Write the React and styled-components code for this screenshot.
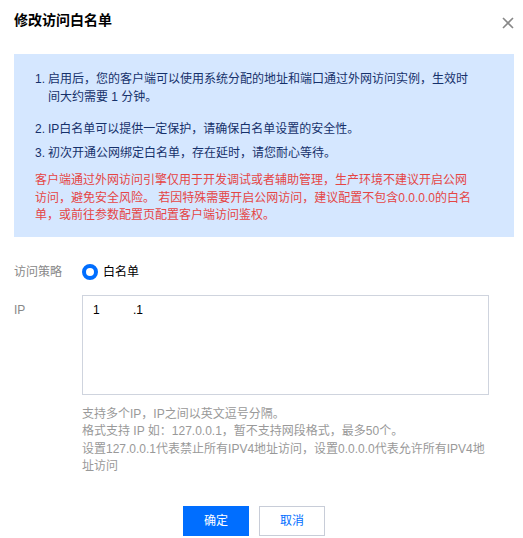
import React from 'react'
import styled, { createGlobalStyle } from 'styled-components'

const GlobalStyle = createGlobalStyle`
  body {
    margin: 0;
    background: #fff;
    font-family: "Liberation Sans", "Noto Sans CJK SC", sans-serif;
    -webkit-font-smoothing: antialiased;
  }
`

const Dialog = styled.div`
  width: 523px;
  height: 538px;
  background: #fff;
  box-sizing: border-box;
`

const Header = styled.div`
  height: 54px;
  display: flex;
  justify-content: space-between;
  align-items: flex-start;
  padding: 10px 9px 0 14px;
  box-sizing: border-box;
`

const Title = styled.h3`
  margin: 0;
  font-size: 14px;
  line-height: 20px;
  font-weight: 700;
  color: #000;
`

const Close = styled.button`
  border: 0;
  background: none;
  padding: 0;
  margin-top: 7px;
  width: 12px;
  height: 12px;
  display: flex;
  cursor: pointer;
`

const Notice = styled.div`
  margin: 0 9px 0 14px;
  padding: 17px 38px 12px 21px;
  background: #d5e7ff;
  font-size: 12px;
  line-height: 17.5px;
`

const Item = styled.div`
  display: flex;
  color: #15316b;
  margin-bottom: ${({ $gap }) => $gap}px;
`

const Num = styled.span`
  flex: 0 0 13px;
`

const Warn = styled.p`
  margin: 0;
  color: #e54545;
`

const Form = styled.div`
  padding: 26px 34px 0 14px;
  font-size: 12px;
  line-height: 18px;
`

const Row = styled.div`
  display: flex;
  align-items: flex-start;
  margin-bottom: ${({ $gap }) => $gap || 0}px;
`

const Label = styled.label`
  flex: 0 0 68px;
  color: #888;
  padding-top: ${({ $top }) => $top || 0}px;
`

const Radio = styled.span`
  display: inline-flex;
  align-items: center;
  gap: 5px;
  color: #000;

  &::before {
    content: '';
    width: 16px;
    height: 16px;
    box-sizing: border-box;
    border-radius: 50%;
    border: 4px solid #006eff;
    background: #fff;
  }
`

const Field = styled.div`
  flex: 1;
`

const Area = styled.textarea`
  display: block;
  width: 100%;
  height: 100px;
  box-sizing: border-box;
  border: 1px solid #cfd4de;
  border-radius: 0;
  padding: 5px 10px;
  resize: none;
  outline: none;
  font: inherit;
  font-size: 12px;
  line-height: 18px;
  color: #000;
  white-space: pre;
`

const Help = styled.div`
  margin-top: 11px;
  color: #999;
  line-height: 17.5px;
`

const Footer = styled.div`
  display: flex;
  justify-content: center;
  gap: 10px;
  padding-left: 5px;
  margin-top: 30px;
`

const Button = styled.button`
  width: 66px;
  height: 30px;
  box-sizing: border-box;
  font: inherit;
  font-size: 12px;
  border: 1px solid ${({ $primary }) => ($primary ? '#006eff' : '#c8cdd8')};
  background: ${({ $primary }) => ($primary ? '#006eff' : '#fff')};
  color: ${({ $primary }) => ($primary ? '#fff' : '#006eff')};
  cursor: pointer;
`

const notes = [
  { n: '1.', text: '启用后，您的客户端可以使用系统分配的地址和端口通过外网访问实例，生效时间大约需要 1 分钟。', gap: 14.5 },
  { n: '2.', text: 'IP白名单可以提供一定保护，请确保白名单设置的安全性。', gap: 6.5 },
  { n: '3.', text: '初次开通公网绑定白名单，存在延时，请您耐心等待。', gap: 10 },
]

const App = () => {
  return (
    <Dialog>
      <GlobalStyle />
      <Header>
        <Title>修改访问白名单</Title>
        <Close aria-label="关闭">
          <svg width="12" height="12" viewBox="0 0 12 12">
            <path d="M1 1L11 11M11 1L1 11" stroke="#888" strokeWidth="1.6" fill="none" />
          </svg>
        </Close>
      </Header>

      <Notice>
        {notes.map((item) => (
          <Item key={item.n} $gap={item.gap}>
            <Num>{item.n}</Num>
            <span>{item.text}</span>
          </Item>
        ))}
        <Warn>
          客户端通过外网访问引擎仅用于开发调试或者辅助管理，生产环境不建议开启公网访问，避免安全风险。 若因特殊需要开启公网访问，建议配置不包含0.0.0.0的白名单，或前往参数配置页配置客户端访问鉴权。
        </Warn>
      </Notice>

      <Form>
        <Row $gap={14}>
          <Label>访问策略</Label>
          <Radio>白名单</Radio>
        </Row>
        <Row>
          <Label $top={6}>IP</Label>
          <Field>
            <Area readOnly defaultValue={'1          .1'} />
            <Help>
              支持多个IP，IP之间以英文逗号分隔。
              <br />
              格式支持 IP 如：127.0.0.1，暂不支持网段格式，最多50个。
              <br />
              设置127.0.0.1代表禁止所有IPV4地址访问，设置0.0.0.0代表允许所有IPV4地址访问
            </Help>
          </Field>
        </Row>
        <Footer>
          <Button $primary>确定</Button>
          <Button>取消</Button>
        </Footer>
      </Form>
    </Dialog>
  )
}

export default App
